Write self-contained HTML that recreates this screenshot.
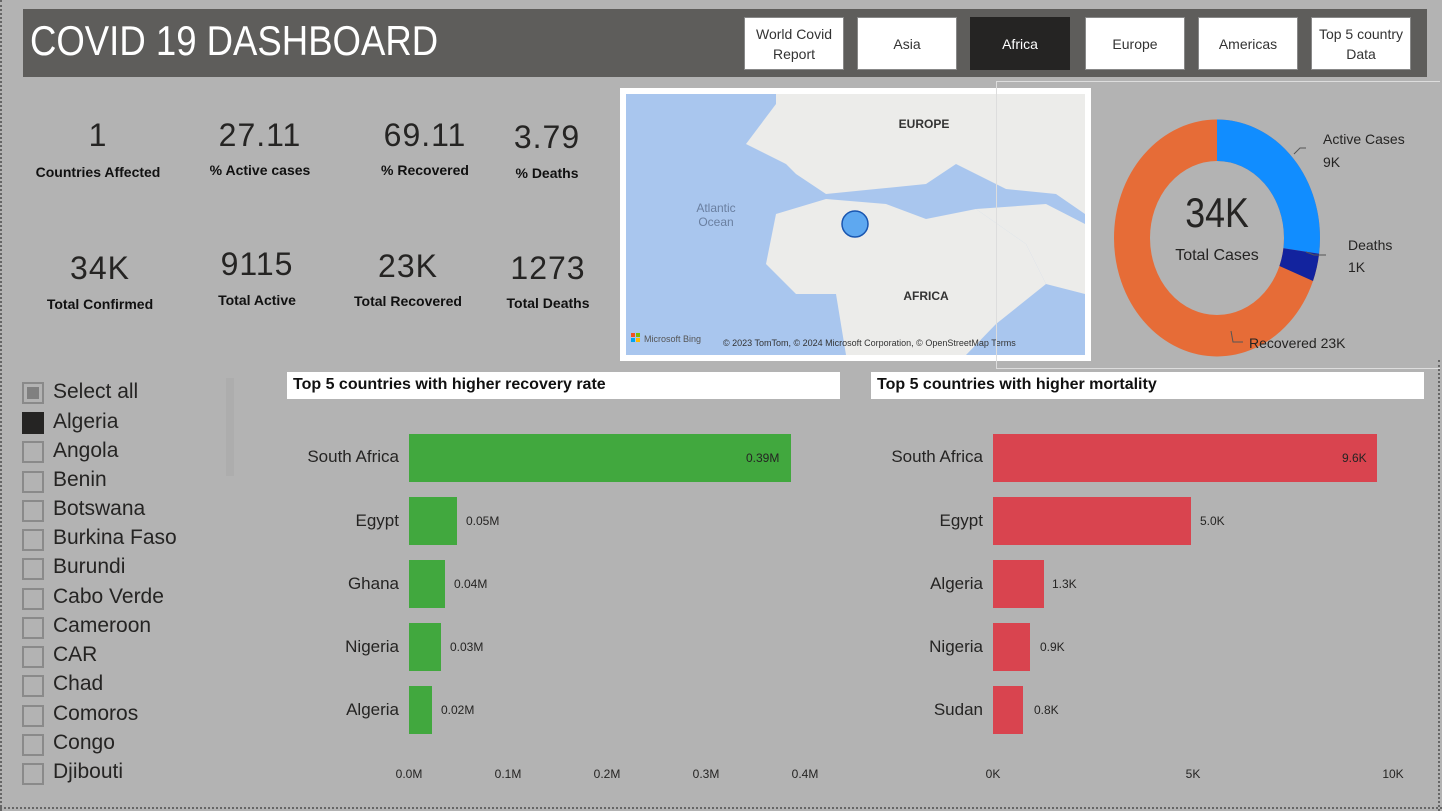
<!DOCTYPE html>
<html><head><meta charset="utf-8"><style>
*{margin:0;padding:0;box-sizing:border-box}
body{width:1442px;height:811px;background:#b3b3b3;position:relative;overflow:hidden;font-family:"Liberation Sans",sans-serif;color:#222}
.a{position:absolute}
.btn{position:absolute;top:17px;height:53px;width:100px;background:#fff;border:1px solid #888;font-size:14px;text-align:center;display:flex;align-items:center;justify-content:center;line-height:20px;color:#333}
.kv{position:absolute;width:170px;text-align:center;font-size:32px;color:#252423;letter-spacing:1px}
.kl{position:absolute;width:170px;text-align:center;font-size:14px;font-weight:bold;color:#111}
.cb{position:absolute;left:22px;width:22px;height:22px;border:2px solid #8a8a8a}
.ct{position:absolute;left:53px;font-size:21px;color:#252423}
.lab{position:absolute;font-size:17px;text-align:right;width:120px;color:#252423}
.val{position:absolute;font-size:12px;color:#252423}
.ax{position:absolute;font-size:12px;color:#252423;transform:translateX(-50%)}
.bar{position:absolute;height:48px}
</style></head><body>
<div class="a" style="left:0;top:0;width:3px;height:811px;border-left:2px dotted #666"></div>
<div class="a" style="left:0;top:807px;width:1442px;height:3px;border-top:2px dotted #666"></div>
<div class="a" style="left:1438px;top:360px;width:2px;height:451px;border-left:2px dotted #666"></div>
<div class="a" style="left:23px;top:9px;width:1404px;height:68px;background:#5e5d5b"></div>
<div class="a" style="left:30px;top:17px;font-size:42px;color:#fff;transform:scaleX(0.87);transform-origin:left top;white-space:nowrap">COVID 19 DASHBOARD</div>
<div class="btn" style="left:744px">World Covid<br>Report</div>
<div class="btn" style="left:857px">Asia</div>
<div class="btn" style="left:970px;background:#252423;color:#fff;border-color:#252423">Africa</div>
<div class="btn" style="left:1085px">Europe</div>
<div class="btn" style="left:1198px">Americas</div>
<div class="btn" style="left:1311px">Top 5 country<br>Data</div>

<div class="kv" style="left:13px;top:117px">1</div><div class="kl" style="left:13px;top:164px">Countries Affected</div>
<div class="kv" style="left:175px;top:117px">27.11</div><div class="kl" style="left:175px;top:162px">% Active cases</div>
<div class="kv" style="left:340px;top:117px">69.11</div><div class="kl" style="left:340px;top:162px">% Recovered</div>
<div class="kv" style="left:462px;top:119px">3.79</div><div class="kl" style="left:462px;top:165px">% Deaths</div>
<div class="kv" style="left:15px;top:250px">34K</div><div class="kl" style="left:15px;top:296px">Total Confirmed</div>
<div class="kv" style="left:172px;top:246px">9115</div><div class="kl" style="left:172px;top:292px">Total Active</div>
<div class="kv" style="left:323px;top:248px">23K</div><div class="kl" style="left:323px;top:293px">Total Recovered</div>
<div class="kv" style="left:463px;top:250px">1273</div><div class="kl" style="left:463px;top:295px">Total Deaths</div>

<div class="a" style="left:620px;top:88px;width:471px;height:273px;background:#fff"></div>
<svg class="a" style="left:626px;top:94px" width="459" height="261" viewBox="0 0 459 261">
<rect width="459" height="261" fill="#a9c6ee"/>
<path d="M150 0 L459 0 L459 120 L430 100 L380 95 L330 70 L300 90 L250 95 L200 100 L170 80 L150 60 Z" fill="#ececea"/>
<path d="M120 50 L150 10 L170 40 L160 70 Z" fill="#ececea"/>
<path d="M150 120 L200 105 L260 110 L300 125 L350 115 L400 150 L420 190 L370 230 L340 261 L220 261 L210 200 L170 200 L140 170 Z" fill="#ececea"/>
<path d="M350 115 L420 110 L459 130 L459 200 L420 190 L400 150 Z" fill="#ececea"/>
<text x="90" y="118" font-size="12" fill="#6a7fa0" text-anchor="middle" font-family="Liberation Sans">Atlantic</text>
<text x="90" y="132" font-size="12" fill="#6a7fa0" text-anchor="middle" font-family="Liberation Sans">Ocean</text>
<text x="298" y="34" font-size="12" font-weight="bold" fill="#333" text-anchor="middle" font-family="Liberation Sans">EUROPE</text>
<text x="300" y="206" font-size="12" font-weight="bold" fill="#333" text-anchor="middle" font-family="Liberation Sans">AFRICA</text>
<ellipse cx="229" cy="130" rx="13" ry="13" fill="#5ea8f0" stroke="#1a56b0" stroke-width="1.5"/>
<rect x="5" y="239" width="4" height="4" fill="#f25022"/><rect x="10" y="239" width="4" height="4" fill="#7fba00"/><rect x="5" y="244" width="4" height="4" fill="#00a4ef"/><rect x="10" y="244" width="4" height="4" fill="#ffb900"/>
<text x="18" y="248" font-size="9" fill="#555" font-family="Liberation Sans">Microsoft Bing</text>
<text x="97" y="252" font-size="9" fill="#333" font-family="Liberation Sans">© 2023 TomTom, © 2024 Microsoft Corporation, © OpenStreetMap  Terms</text>
</svg>

<div class="a" style="left:996px;top:81px;width:444px;height:288px;border:1px solid #ddd;border-right:none"></div>
<svg class="a" style="left:1100px;top:110px" width="340" height="250">
<g transform="translate(117,128) scale(1,1.15) rotate(-90)">
<circle r="85" fill="none" stroke="#e66c37" stroke-width="36"/>
<circle r="85" fill="none" stroke="#118dff" stroke-width="36" stroke-dasharray="144.8 400"/>
<circle r="85" fill="none" stroke="#12239e" stroke-width="36" stroke-dasharray="0 144.8 20.2 400"/>
</g>
<polyline points="194,44 200,38 206,38" fill="none" stroke="#555"/>
<polyline points="206,142 214,145 226,145" fill="none" stroke="#555"/>
<polyline points="131,221 133,232 143,232" fill="none" stroke="#555"/>
<text x="117" y="117" font-size="42" text-anchor="middle" fill="#252423" font-family="Liberation Sans" transform="translate(117,0) scale(0.85,1) translate(-117,0)">34K</text>
<text x="117" y="150" font-size="16" text-anchor="middle" fill="#252423" font-family="Liberation Sans">Total Cases</text>
<text x="223" y="34" font-size="14" fill="#252423" font-family="Liberation Sans">Active Cases</text>
<text x="223" y="57" font-size="14" fill="#252423" font-family="Liberation Sans">9K</text>
<text x="248" y="140" font-size="14" fill="#252423" font-family="Liberation Sans">Deaths</text>
<text x="248" y="162" font-size="14" fill="#252423" font-family="Liberation Sans">1K</text>
<text x="149" y="238" font-size="14" fill="#252423" font-family="Liberation Sans">Recovered 23K</text>
</svg>

<div class="cb" style="top:382px"><div style="margin:3px;width:12px;height:12px;background:#808080"></div></div><div class="ct" style="top:380px">Select all</div>
<div class="cb" style="top:412px;background:#252423;border-color:#252423"></div><div class="ct" style="top:410px">Algeria</div>
<div class="cb" style="top:441px"></div><div class="ct" style="top:439px">Angola</div>
<div class="cb" style="top:471px"></div><div class="ct" style="top:468px">Benin</div>
<div class="cb" style="top:500px"></div><div class="ct" style="top:497px">Botswana</div>
<div class="cb" style="top:529px"></div><div class="ct" style="top:526px">Burkina Faso</div>
<div class="cb" style="top:558px"></div><div class="ct" style="top:555px">Burundi</div>
<div class="cb" style="top:588px"></div><div class="ct" style="top:585px">Cabo Verde</div>
<div class="cb" style="top:617px"></div><div class="ct" style="top:614px">Cameroon</div>
<div class="cb" style="top:646px"></div><div class="ct" style="top:643px">CAR</div>
<div class="cb" style="top:675px"></div><div class="ct" style="top:672px">Chad</div>
<div class="cb" style="top:705px"></div><div class="ct" style="top:702px">Comoros</div>
<div class="cb" style="top:734px"></div><div class="ct" style="top:731px">Congo</div>
<div class="cb" style="top:763px"></div><div class="ct" style="top:760px">Djibouti</div>
<div class="a" style="left:226px;top:378px;width:8px;height:98px;background:#adadad"></div>

<div class="a" style="left:287px;top:372px;width:553px;height:27px;background:#fff;font-weight:bold;font-size:16px;padding:4px 6px;color:#111">Top 5 countries with higher recovery rate</div>
<div class="lab" style="left:279px;top:447px">South Africa</div>
<div class="lab" style="left:279px;top:511px">Egypt</div>
<div class="lab" style="left:279px;top:574px">Ghana</div>
<div class="lab" style="left:279px;top:637px">Nigeria</div>
<div class="lab" style="left:279px;top:700px">Algeria</div>
<div class="bar" style="left:409px;top:434px;width:382px;background:#41a83e"></div>
<div class="bar" style="left:409px;top:497px;width:48px;background:#41a83e"></div>
<div class="bar" style="left:409px;top:560px;width:36px;background:#41a83e"></div>
<div class="bar" style="left:409px;top:623px;width:32px;background:#41a83e"></div>
<div class="bar" style="left:409px;top:686px;width:23px;background:#41a83e"></div>
<div class="val" style="left:746px;top:451px">0.39M</div>
<div class="val" style="left:466px;top:514px">0.05M</div>
<div class="val" style="left:454px;top:577px">0.04M</div>
<div class="val" style="left:450px;top:640px">0.03M</div>
<div class="val" style="left:441px;top:703px">0.02M</div>
<div class="ax" style="left:409px;top:767px">0.0M</div>
<div class="ax" style="left:508px;top:767px">0.1M</div>
<div class="ax" style="left:607px;top:767px">0.2M</div>
<div class="ax" style="left:706px;top:767px">0.3M</div>
<div class="ax" style="left:805px;top:767px">0.4M</div>

<div class="a" style="left:871px;top:372px;width:553px;height:27px;background:#fff;font-weight:bold;font-size:16px;padding:4px 6px;color:#111">Top 5 countries with higher mortality</div>
<div class="lab" style="left:863px;top:447px">South Africa</div>
<div class="lab" style="left:863px;top:511px">Egypt</div>
<div class="lab" style="left:863px;top:574px">Algeria</div>
<div class="lab" style="left:863px;top:637px">Nigeria</div>
<div class="lab" style="left:863px;top:700px">Sudan</div>
<div class="bar" style="left:993px;top:434px;width:384px;background:#d9444f"></div>
<div class="bar" style="left:993px;top:497px;width:198px;background:#d9444f"></div>
<div class="bar" style="left:993px;top:560px;width:51px;background:#d9444f"></div>
<div class="bar" style="left:993px;top:623px;width:37px;background:#d9444f"></div>
<div class="bar" style="left:993px;top:686px;width:30px;background:#d9444f"></div>
<div class="val" style="left:1342px;top:451px">9.6K</div>
<div class="val" style="left:1200px;top:514px">5.0K</div>
<div class="val" style="left:1052px;top:577px">1.3K</div>
<div class="val" style="left:1040px;top:640px">0.9K</div>
<div class="val" style="left:1034px;top:703px">0.8K</div>
<div class="ax" style="left:993px;top:767px">0K</div>
<div class="ax" style="left:1193px;top:767px">5K</div>
<div class="ax" style="left:1393px;top:767px">10K</div>
</body></html>
